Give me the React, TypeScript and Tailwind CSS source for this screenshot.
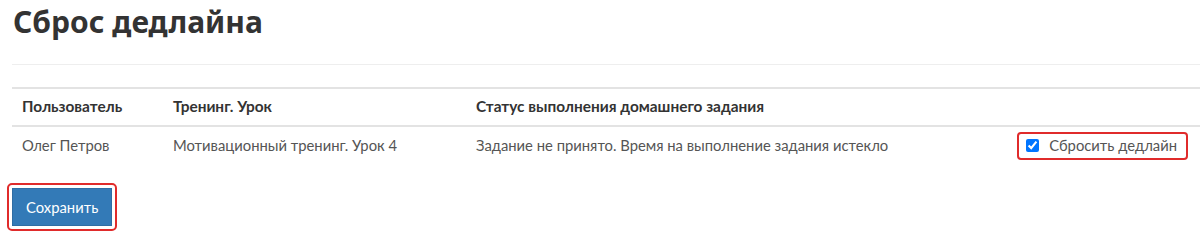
import React from "react";

export default function App() {
  return (
    <div className="w-[1200px] h-[246px] bg-white overflow-hidden" style={{ fontFamily: "Lato, 'Noto Sans', sans-serif" }}>
      <div className="pl-[12px]">
        <h1 className="text-[30px] leading-[44px] font-bold text-[#333] pt-[0px] pl-[1px]" style={{ fontFamily: "'Noto Sans', sans-serif" }}>
          Сброс дедлайна
        </h1>
        <div className="mt-[20px] border-t border-[#eeeeee]" />
        <table className="mt-[22px] w-full border-collapse text-[14.8px]">
          <thead>
            <tr className="border-t-2 border-b-2 border-[#e3e3e3]">
              <th className="text-left font-bold text-[#333] text-[15.4px] h-[38px] px-[10px] w-[151px]">Пользователь</th>
              <th className="text-left font-bold text-[#333] text-[15.4px] px-[10px] w-[303px]">Тренинг. Урок</th>
              <th className="text-left font-bold text-[#333] text-[15.4px] px-[10px]">Статус выполнения домашнего задания</th>
              <th className="px-[10px]"></th>
            </tr>
          </thead>
          <tbody>
            <tr>
              <td className="text-[#555] h-[38px] px-[10px]">Олег Петров</td>
              <td className="text-[#555] px-[10px]">Мотивационный тренинг. Урок 4</td>
              <td className="text-[#555] px-[10px]">Задание не принято. Время на выполнение задания истекло</td>
              <td className="pr-[12px] text-right">
                <label className="inline-flex items-center gap-[10px] border-2 border-[#e02b2b] rounded-[4px] h-[28px] pl-[7px] pr-[9px] text-[#555]">
                  <input type="checkbox" defaultChecked className="w-[13px] h-[13px] accent-[#0075ff]" />
                  <span>Сбросить дедлайн</span>
                </label>
              </td>
            </tr>
          </tbody>
        </table>
        <div className="mt-[19px] ml-[-5px] inline-block border-2 border-[#e02b2b] rounded-[5px] p-[3px]">
          <button className="bg-[#337ab7] border border-[#2e6da4] text-white text-[14.8px] h-[38px] px-[13px]">Сохранить</button>
        </div>
      </div>
    </div>
  );
}
